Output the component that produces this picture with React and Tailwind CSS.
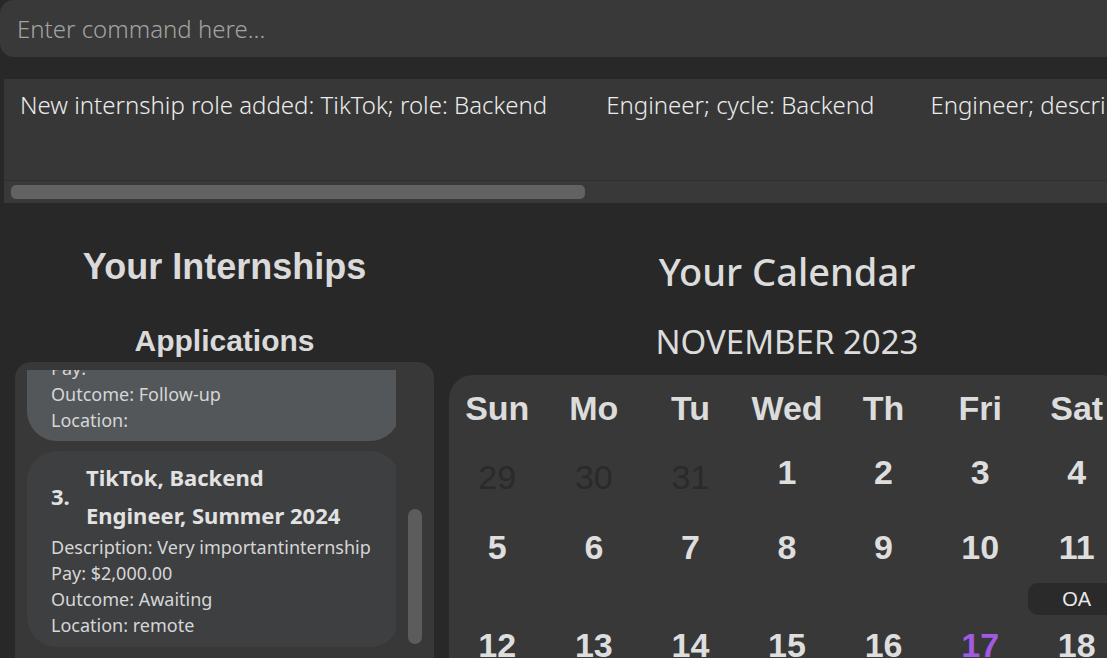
import React from 'react';

const SEGOE = { fontFamily: '"Noto Sans", "Open Sans", sans-serif' };

const dayNames = ['Sun', 'Mo', 'Tu', 'Wed', 'Th', 'Fri', 'Sat'];

const weeks = [
  [
    { d: 29, other: true },
    { d: 30, other: true },
    { d: 31, other: true },
    { d: 1 },
    { d: 2 },
    { d: 3 },
    { d: 4 },
  ],
  [
    { d: 5 },
    { d: 6 },
    { d: 7 },
    { d: 8 },
    { d: 9 },
    { d: 10 },
    { d: 11, events: ['OA'] },
  ],
  [
    { d: 12 },
    { d: 13 },
    { d: 14 },
    { d: 15 },
    { d: 16 },
    { d: 17, today: true },
    { d: 18 },
  ],
];

const CommandBox = () => (
  <div className="h-[57px] w-full rounded-[14px] bg-[#393939] flex items-center px-[17px]">
    <span className="text-[24px] font-light text-[#a3a3a3]" style={SEGOE}>
      Enter command here...
    </span>
  </div>
);

const ResultDisplay = () => (
  <div className="ml-[4px] mt-[22px] h-[124px] bg-[#373737] flex flex-col">
    <div
      className="flex-1 px-[16px] pt-[10px] whitespace-nowrap text-[24px] leading-[32px] font-light text-[#ececec]"
      style={SEGOE}
    >
      <span>New internship role added: TikTok; role: Backend</span>
      <span className="ml-[59px]">Engineer; cycle: Backend</span>
      <span className="ml-[56px]">Engineer; description: Very important internship</span>
    </div>
    {/* horizontal scrollbar */}
    <div className="h-[23px] border-t border-[#303030] bg-[#393939] px-[7px] pt-[4px]">
      <div className="h-[14px] w-[574px] rounded-[5px] bg-[#626262]"></div>
    </div>
  </div>
);

const Detail = ({ children }) => (
  <p className="text-[18px] leading-[26px] text-[#d6d6d6]" style={SEGOE}>{children}</p>
);

const InternshipList = () => (
  <div className="mx-[15px] rounded-[16px] bg-[#383838] h-[320px] pt-[8px] flex">
    <div className="w-[385px] overflow-hidden pl-[12px]">
      {/* card 2, scrolled mostly out of view */}
      <div className="w-[373px] rounded-b-[30px] bg-[#53575a] pl-[24px] pb-[8px] -mt-[15px]">
        <Detail>Pay:</Detail>
        <Detail>Outcome: Follow-up</Detail>
        <Detail>Location:</Detail>
      </div>
      <div className="mt-[10px] w-[373px] rounded-[30px] bg-[#3e3f41] pl-[24px] pt-[7px] pb-[9px]">
        <div className="flex items-center text-[#e2e2e2] font-bold text-[22px] leading-[38px]" style={SEGOE}>
          <span className="w-[35px]">3.</span>
          <span>
            TikTok, Backend
            <br />
            Engineer, Summer 2024
          </span>
        </div>
        <Detail>Description: Very importantinternship</Detail>
        <Detail>Pay: $2,000.00</Detail>
        <Detail>Outcome: Awaiting</Detail>
        <Detail>Location: remote</Detail>
      </div>
    </div>
    {/* vertical scrollbar */}
    <div className="w-[38px] flex justify-center">
      <div className="mt-[139px] h-[135px] w-[14px] rounded-full bg-[#5c5c5c]"></div>
    </div>
  </div>
);

const Calendar = () => (
  <div className="w-[676px] text-center">
    <h2 className="pt-[46px] text-[38px] leading-[44px] font-medium text-[#dcdcdc]" style={SEGOE}>
      Your Calendar
    </h2>
    <h3 className="mt-[29px] text-[33px] leading-[40px] text-[#dcdcdc]" style={SEGOE}>
      NOVEMBER 2023
    </h3>
    <div
      className="mt-[13px] rounded-[24px] bg-[#383838] pt-[13px] h-[400px]"
      style={{ fontFamily: '"Liberation Sans", Arial, sans-serif' }}
    >
      <div className="grid grid-cols-7">
        {dayNames.map((n) => (
          <div key={n} className="h-[40px] leading-[40px] text-[34px] font-bold text-[#dcdcdc]">
            {n}
          </div>
        ))}
      </div>
      <div className="mt-[14px] flex flex-col">
        {weeks.map((week, i) => (
          <div key={i} className="grid grid-cols-7">
            {week.map((c) => (
              <div key={c.d} className="flex flex-col">
                <div
                  className={
                    c.other
                      ? 'h-[60px] pt-[5px] leading-[60px] text-[34px] text-[#2a2a2a]'
                      : c.today
                      ? 'h-[60px] leading-[60px] text-[34px] font-bold text-[#a25ae0]'
                      : 'h-[60px] leading-[60px] text-[34px] font-bold text-[#dedede]'
                  }
                >
                  {c.d}
                </div>
                <div className="min-h-[15px] pt-[6px]">
                  {(c.events || []).map((e) => (
                    <div
                      key={e}
                      className="h-[32px] leading-[32px] rounded-[10px] bg-[#2a2a2a] text-[20px] text-[#e8e8e8]"
                    >
                      {e}
                    </div>
                  ))}
                </div>
              </div>
            ))}
          </div>
        ))}
      </div>
    </div>
  </div>
);

export default function App() {
  return (
    <div className="h-[658px] w-full overflow-hidden bg-[#282828]">
      <div className="w-[1140px]">
        <CommandBox />
        <ResultDisplay />
        <div className="flex">
          <div className="w-[449px] text-center" style={{ fontFamily: '"Liberation Sans", Arial, sans-serif' }}>
            <h1 className="pt-[42px] text-[36px] leading-[43px] font-bold text-[#dadada]">Your Internships</h1>
            <h2 className="mt-[35px] text-[30px] leading-[35px] font-bold text-[#dadada]">Applications</h2>
            <div className="mt-[4px] text-left">
              <InternshipList />
            </div>
          </div>
          <Calendar />
        </div>
      </div>
    </div>
  );
}
